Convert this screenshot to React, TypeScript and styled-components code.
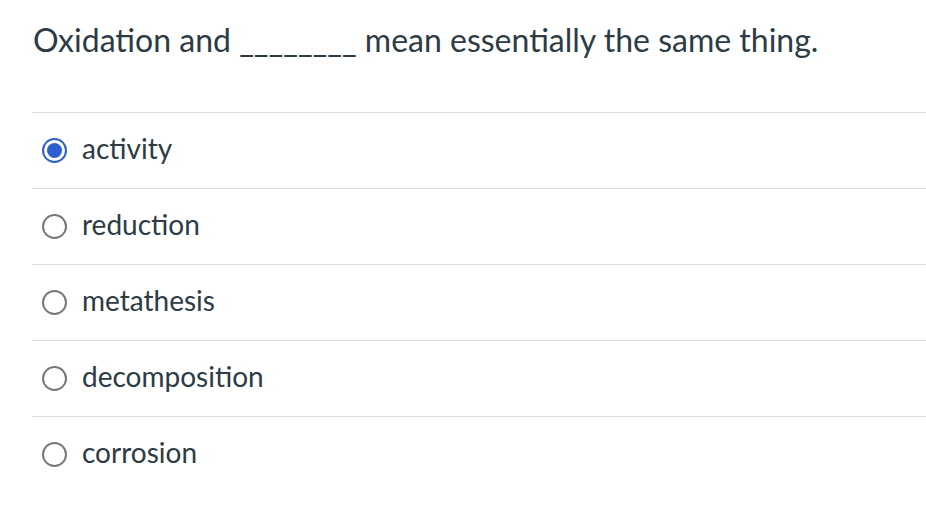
import styled, { createGlobalStyle } from 'styled-components';

const GlobalStyle = createGlobalStyle`
  body {
    margin: 0;
    background: #fff;
    font-family: Lato, "Open Sans", sans-serif;
    color: #2d3b45;
  }
`;

const Page = styled.div`
  padding: 18px 0 0 32px;
`;

const Question = styled.div`
  font-size: 32px;
  line-height: 44px;
  margin-left: 1px;
  margin-bottom: 50px;
`;

const Options = styled.div`
  display: flex;
  flex-direction: column;
`;

const Row = styled.label`
  display: flex;
  align-items: center;
  height: 75px;
  border-top: 1px solid #dcdcdc;
  gap: 15px;
  padding-left: 10px;
  font-size: 28px;
  line-height: 34px;
`;

const Radio = styled.span<{ $checked?: boolean }>`
  box-sizing: border-box;
  width: 25px;
  height: 25px;
  border-radius: 50%;
  flex-shrink: 0;
  border: 2px solid ${(p) => (p.$checked ? '#2b5fd0' : '#777')};
  display: flex;
  align-items: center;
  justify-content: center;

  &::after {
    content: '';
    display: ${(p) => (p.$checked ? 'block' : 'none')};
    width: 15px;
    height: 15px;
    border-radius: 50%;
    background: #2b5fd0;
  }
`;

const Label = styled.span`
  margin-top: -5px;
`;

const options = ['activity', 'reduction', 'metathesis', 'decomposition', 'corrosion'];

const App = () => {
  const selected = 'activity';

  return (
    <>
      <GlobalStyle />
      <Page>
        <Question>
          Oxidation and ________ mean essentially the same thing.
        </Question>
        <Options>
          {options.map((opt) => (
            <Row key={opt}>
              <Radio $checked={opt === selected} />
              <Label>{opt}</Label>
            </Row>
          ))}
        </Options>
      </Page>
    </>
  );
};

export default App;
